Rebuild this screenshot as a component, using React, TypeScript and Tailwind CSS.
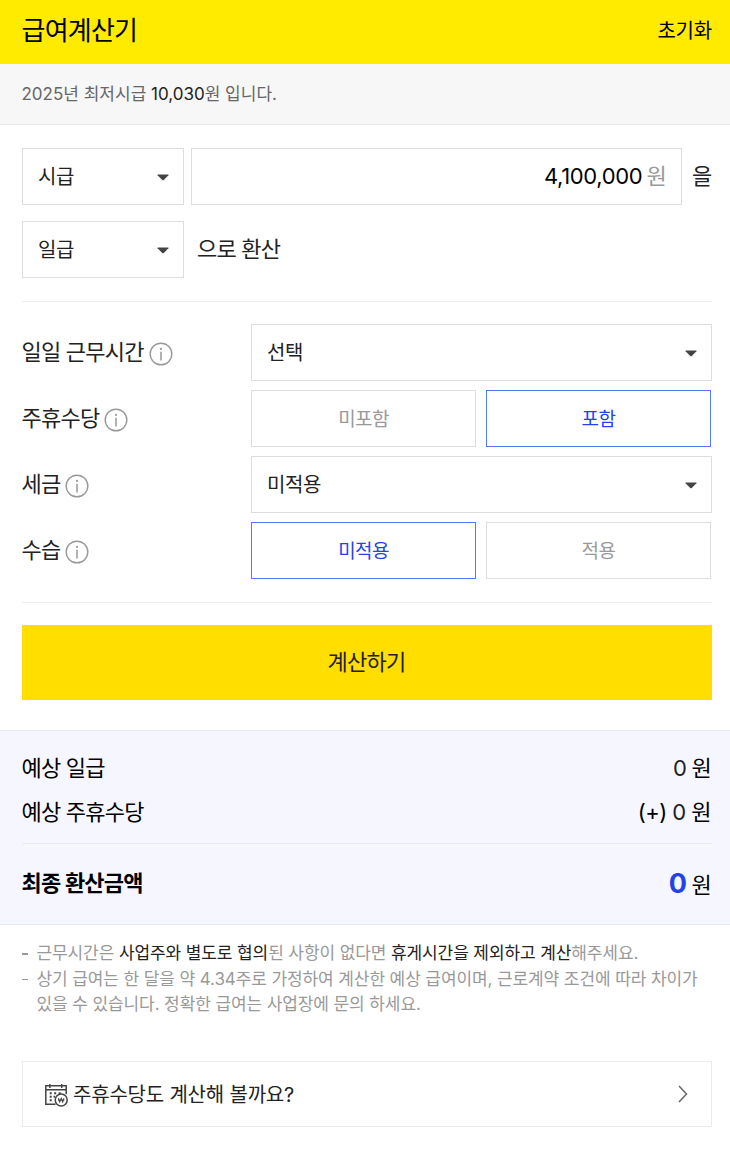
import { useState } from 'react'
import type { ReactNode } from 'react'
import clsx from 'clsx'

const PAY_TYPES = ['시급', '일급', '주급', '월급', '연봉']
const HOURS = ['선택', '4시간', '6시간', '8시간']
const TAXES = ['미적용', '9.4% 적용', '3.3% 적용']

interface SelectProps {
  value: string
  options: string[]
  onChange: (value: string) => void
  className?: string
}

function Select({ value, options, onChange, className }: SelectProps) {
  return (
    <div className={clsx('grid h-[57px] items-center border border-[#ddd] bg-white', className)}>
      <select
        value={value}
        onChange={(e) => onChange(e.target.value)}
        className="col-start-1 row-start-1 h-full w-full appearance-none bg-transparent pl-[15px] text-[20px] tracking-[-0.02em] text-[#222] outline-none"
      >
        {options.map(o => <option key={o} value={o}>{o}</option>)}
      </select>
      <svg
        width="12"
        height="7"
        viewBox="0 0 12 7"
        className="pointer-events-none col-start-1 row-start-1 mt-px mr-[14px] justify-self-end"
      >
        <path d="M1 .4h10q.9 0 .4.8L6.8 6q-.8.6-1.6 0L.6 1.2Q.1.4 1 .4Z" fill="#444" />
      </svg>
    </div>
  )
}

interface ToggleProps {
  value: string
  options: string[]
  onChange: (value: string) => void
}

function Toggle({ value, options, onChange }: ToggleProps) {
  return (
    <div className="flex w-[461px] gap-[10px]">
      {options.map(o => (
        <button
          key={o}
          type="button"
          onClick={() => onChange(o)}
          className={clsx(
            'h-[57px] w-[225px] border pt-[3px] text-[19px] tracking-[-0.03em]',
            o === value ? 'border-[#5778fb] text-[#2343e8]' : 'border-[#ddd] text-[#999]',
          )}
        >
          {o}
        </button>
      ))}
    </div>
  )
}

function InfoIcon() {
  return (
    <svg width="24" height="24" viewBox="0 0 24 24" fill="none" className="mt-[2px] ml-[5px]">
      <circle cx="12" cy="12" r="10.8" stroke="#999" strokeWidth="1.4" />
      <circle cx="12" cy="6.9" r="1.1" fill="#999" />
      <path d="M12 9.8v8.7" stroke="#999" strokeWidth="1.5" />
    </svg>
  )
}

function CalendarIcon() {
  return (
    <svg width="24" height="24" viewBox="0 0 24 24" fill="none" stroke="#444" strokeWidth="1.5" className="mt-[3px]">
      <path d="M11.5 21.3H1.8V2.8h20.4v8.4M1.8 6.7h20.4M5.9 1v4M17.7 1v4" />
      <path d="M5.7 10.3h2M10.2 10.3h2M14.7 10.3h2M5.7 13.8h2M9.6 13.8h1.5M5.7 17.3h2" strokeWidth="1.9" />
      <circle cx="17.2" cy="17" r="6" />
      <path d="m14.4 15.2 1.3 3.8 1.5-3.5 1.5 3.5 1.3-3.8M14 17h6.4" strokeWidth="1.1" />
    </svg>
  )
}

function Field({ label, children }: { label: string; children: ReactNode }) {
  return (
    <div className="flex h-[57px] items-center justify-between">
      <div className="-ml-[0.5px] flex items-center text-[22px] leading-[30px] tracking-[-0.035em] text-[#222]">
        <span className="-mt-px">{label}</span>
        <InfoIcon />
      </div>
      {children}
    </div>
  )
}

export default function App() {
  const [from, setFrom] = useState('시급')
  const [to, setTo] = useState('일급')
  const [amount, setAmount] = useState('4,100,000')
  const [hours, setHours] = useState('선택')
  const [holiday, setHoliday] = useState('포함')
  const [tax, setTax] = useState('미적용')
  const [trainee, setTrainee] = useState('미적용')

  function reset() {
    setFrom('시급')
    setTo('일급')
    setAmount('')
    setHours('선택')
    setHoliday('미포함')
    setTax('미적용')
    setTrainee('미적용')
  }

  return (
    <div className="min-h-[1164px] w-[730px] bg-white font-['Inter','Noto_Sans_CJK_KR',sans-serif] text-black">
      <header className="flex h-16 items-center justify-between bg-[#ffeb00] pr-[18px] pb-[3px] pl-[21.5px]">
        <h1 className="text-[26px] leading-9 tracking-[-0.03em]">급여계산기</h1>
        <button type="button" onClick={reset} className="text-[20px] leading-7 tracking-[-0.01em]">초기화</button>
      </header>

      <p className="h-[61px] border-b border-[#eaeaea] bg-[#f7f7f7] px-[21.5px] text-[17px] leading-[60px] text-[#666]">
        2025년 최저시급 <span className="text-[#222]">10,030</span>원 입니다.
      </p>

      <main className="px-[22px] pr-[18px] pt-[23px]">
        <div className="flex items-center">
          <Select value={from} options={PAY_TYPES} onChange={setFrom} className="w-[162px]" />
          <label className="ml-[7px] flex h-[57px] w-[491px] items-center border border-[#ddd] pr-[15px] text-[22px] tracking-[-0.03em]">
            <input
              value={amount}
              onChange={(e) => setAmount(e.target.value)}
              className="min-w-0 flex-1 text-right tracking-[-0.015em] outline-none"
            />
            <span className="ml-1 text-[#999]">원</span>
          </label>
          <span className="ml-[10px] text-[22px] tracking-[-0.03em] text-[#222]">을</span>
        </div>
        <div className="mt-4 flex items-center">
          <Select value={to} options={PAY_TYPES} onChange={setTo} className="w-[162px]" />
          <span className="ml-[13px] text-[22px] tracking-[-0.035em] text-[#222]">으로 환산</span>
        </div>
        <hr className="mt-[23px] w-[690px] border-[#eee]" />

        <div className="mt-[22px] flex w-[690px] flex-col gap-[9px]">
          <Field label="일일 근무시간">
            <Select value={hours} options={HOURS} onChange={setHours} className="w-[461px]" />
          </Field>
          <Field label="주휴수당">
            <Toggle value={holiday} options={['미포함', '포함']} onChange={setHoliday} />
          </Field>
          <Field label="세금">
            <Select value={tax} options={TAXES} onChange={setTax} className="w-[461px]" />
          </Field>
          <Field label="수습">
            <Toggle value={trainee} options={['미적용', '적용']} onChange={setTrainee} />
          </Field>
        </div>
        <hr className="mt-[23px] w-[690px] border-[#eee]" />

        <button
          type="button"
          className="mt-[22px] h-[75px] w-[690px] bg-[#ffde00] pr-px text-[22px] tracking-[-0.035em] text-[#222]"
        >
          계산하기
        </button>
      </main>

      <section className="mt-[30px] h-[195px] border-y border-[#ebebeb] bg-[#f5f6ff] pr-[19px] pl-[22px] pt-[15px] text-[22px] leading-[44px] tracking-[-0.035em]">
        <div className="flex justify-between">
          <span className="-ml-[0.5px]">예상 일급</span>
          <span><span className="text-[#222]">0</span> 원</span>
        </div>
        <div className="flex justify-between">
          <span className="-ml-[0.5px]">예상 주휴수당</span>
          <span className="tracking-[-0.025em]">(+) <span className="text-[#222]">0</span> 원</span>
        </div>
        <hr className="mt-[9px] w-[690px] border-[#ebebeb]" />
        <div className="mt-[18px] flex items-center justify-between">
          <strong className="-mt-1 -ml-[0.5px] font-bold">최종 환산금액</strong>
          <span><strong className="text-[27px] font-bold tracking-[-0.03em] text-[#2343e8]">0</strong> 원</span>
        </div>
      </section>

      <ul className="px-[22px] pt-4 text-[17px] leading-[25.5px] tracking-[-0.1px] text-[#999]">
        <li className="flex">
          <span className="mt-3 mr-[8.5px] h-[2px] w-[6px] shrink-0 bg-[#999]" />
          <p className="whitespace-nowrap">
            근무시간은 <span className="text-[#222]">사업주와 별도로 협의</span>된 사항이 없다면{' '}
            <span className="text-[#222]">휴게시간을 제외하고 계산</span>해주세요.
          </p>
        </li>
        <li className="flex">
          <span className="mt-3 mr-[8.5px] h-px w-[6px] shrink-0 bg-[#999]" />
          <p className="whitespace-nowrap">
            상기 급여는 한 달을 약 4.34주로 가정하여 계산한 예상 급여이며, 근로계약 조건에 따라 차이가
            <br />
            있을 수 있습니다. 정확한 급여는 사업장에 문의 하세요.
          </p>
        </li>
      </ul>

      <a href="#" className="mr-[18px] ml-[22px] mt-[43px] flex h-[66px] w-[690px] items-center border border-[#ebebeb] pr-[22px] pl-[21px] text-[#222]">
        <CalendarIcon />
        <span className="mt-[2px] ml-[5px] text-[20px] tracking-[-0.01em]">주휴수당도 계산해 볼까요?</span>
        <svg width="12" height="20" viewBox="0 0 12 20" fill="none" className="ml-auto">
          <path d="m2 2 7.5 8L2 18" stroke="#666" strokeWidth="1.5" />
        </svg>
      </a>
    </div>
  )
}
